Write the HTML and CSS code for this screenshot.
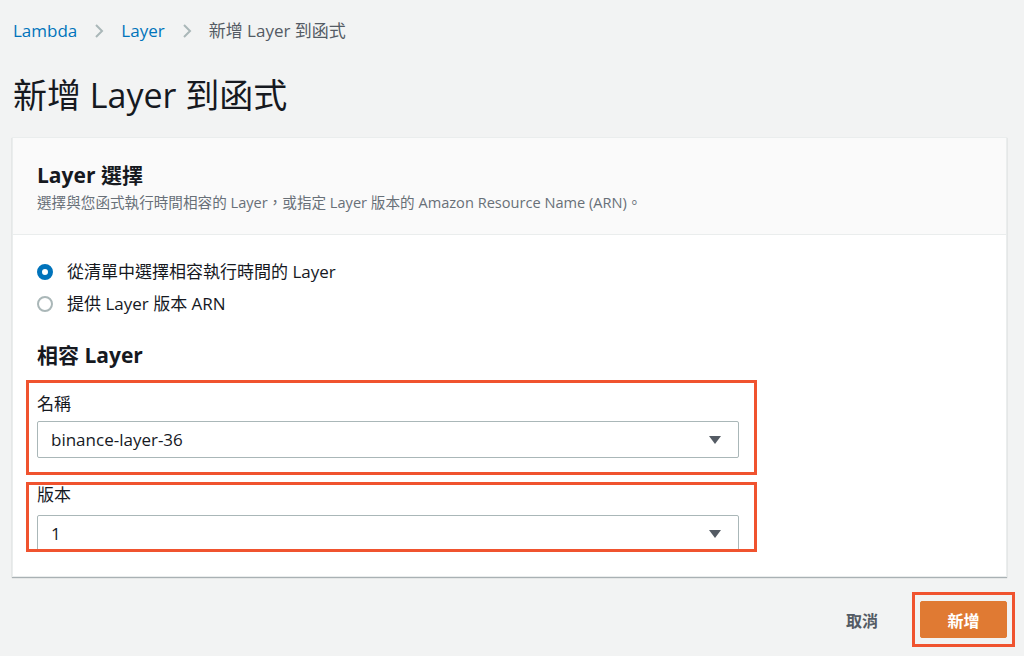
FILE: index.html
```html
<!DOCTYPE html>
<html lang="zh-Hant">

<head>
    <meta charset="UTF-8" />
    <meta name="viewport" content="width=device-width, initial-scale=1" />
    <title>新增 Layer 到函式</title>
    <link rel="stylesheet" href="styles.css">
</head>

<body>
    <nav class="breadcrumbs">
        <a href="#">Lambda</a>
        <svg class="crumb-sep" width="12" height="16" viewBox="0 0 12 16">
            <polyline points="3,2 9,8 3,14" fill="none" stroke="#aab7b8" stroke-width="2" />
        </svg>
        <a href="#">Layer</a>
        <svg class="crumb-sep" width="12" height="16" viewBox="0 0 12 16">
            <polyline points="3,2 9,8 3,14" fill="none" stroke="#aab7b8" stroke-width="2" />
        </svg>
        <span class="crumb-current">新增 Layer 到函式</span>
    </nav>

    <h1 class="page-title">新增 Layer 到函式</h1>

    <div class="panel">
        <div class="panel-header">
            <h2>Layer 選擇</h2>
            <p>選擇與您函式執行時間相容的 Layer，或指定 Layer 版本的 Amazon Resource Name (ARN)。</p>
        </div>
        <div class="panel-body">
            <div class="radio-group">
                <label class="radio"><span class="radio-dot checked"></span> 從清單中選擇相容執行時間的 Layer</label>
                <label class="radio"><span class="radio-dot"></span> 提供 Layer 版本 ARN</label>
            </div>

            <h3>相容 Layer</h3>

            <div class="field field-name">
                <div class="field-label">名稱</div>
                <div class="select">
                    <span>binance-layer-36</span>
                    <svg width="12" height="10" viewBox="0 0 12 10">
                        <polygon points="0,1 12,1 6,9" fill="#545b64" />
                    </svg>
                </div>
            </div>

            <div class="field field-version">
                <div class="field-label">版本</div>
                <div class="select">
                    <span>1</span>
                    <svg width="12" height="10" viewBox="0 0 12 10">
                        <polygon points="0,1 12,1 6,9" fill="#545b64" />
                    </svg>
                </div>
            </div>
        </div>
    </div>

    <div class="actions">
        <button class="btn-link">取消</button>
        <div class="highlight">
            <button class="btn-primary">新增</button>
        </div>
    </div>
</body>

</html>
```

FILE: styles.css
```css
body {
    margin: 0;
    background-color: #f2f3f3;
    color: #16191f;
    font-family: "Open Sans", "Noto Sans CJK TC", sans-serif;
}

.breadcrumbs {
    display: flex;
    align-items: center;
    padding: 19px 0 0 13px;
    font-size: 17px;
    line-height: 24px;
}

.breadcrumbs a {
    color: #0073bb;
    text-decoration: none;
}

.crumb-sep {
    margin: 0 16px;
}

.crumb-current {
    color: #545b64;
}

.page-title {
    margin: 32px 0 0 13px;
    font-size: 34px;
    line-height: 40px;
    font-weight: normal;
}

.panel {
    margin: 22px 17px 0 12px;
    background: white;
    border: 1px solid #eaeded;
    box-shadow: 0 1px 1px rgba(0, 28, 36, 0.3);
}

.panel-header {
    background: #fafafa;
    border-bottom: 1px solid #eaeded;
    padding: 23px 24px 22px;
}

.panel-header h2 {
    margin: 0;
    font-size: 21px;
    line-height: 28px;
    font-weight: bold;
}

.panel-header p {
    margin: 3px 0 0;
    font-size: 14.6px;
    line-height: 20px;
    color: #687078;
}

.panel-body {
    padding: 25px 24px 24px;
}

.radio-group {
    display: flex;
    flex-direction: column;
    gap: 8px;
}

.radio {
    display: flex;
    align-items: center;
    gap: 14px;
    font-size: 17px;
    line-height: 24px;
}

.radio-dot {
    box-sizing: border-box;
    width: 16px;
    height: 16px;
    border-radius: 50%;
    border: 2px solid #aab7b8;
    background: white;
}

.radio-dot.checked {
    border: 5px solid #0073bb;
}

.panel-body h3 {
    margin: 25px 0 0;
    font-size: 21px;
    line-height: 28px;
    font-weight: bold;
}

.field {
    box-sizing: border-box;
    width: 731px;
    margin: 11px 0 0 -11px;
    border: 3px solid #f0532f;
    padding-left: 8px;
}

.field-name {
    height: 95px;
    padding-top: 10px;
}

.field-version {
    height: 70px;
    margin-top: 7px;
    overflow: hidden;
}

.field-label {
    font-size: 17px;
    line-height: 22px;
}

.field-name .select {
    margin-top: 6px;
}

.field-version .field-label {
    line-height: 20px;
}

.field-version .select {
    margin-top: 10px;
}

.select {
    box-sizing: border-box;
    display: flex;
    align-items: center;
    justify-content: space-between;
    width: 702px;
    height: 37px;
    padding: 0 17px 0 13px;
    border: 1px solid #aab7b8;
    border-radius: 2px;
    background: white;
    font-size: 17px;
}

.actions {
    display: flex;
    justify-content: flex-end;
    align-items: center;
    margin: 15px 9px 0 0;
}

.btn-link {
    background: none;
    border: none;
    padding: 0 20px;
    margin-right: 14px;
    font-family: inherit;
    font-size: 16px;
    font-weight: bold;
    color: #545b64;
    cursor: pointer;
}

.highlight {
    border: 3px solid #f0532f;
    padding: 6px 5px;
}

.btn-primary {
    display: block;
    width: 87px;
    height: 37px;
    background-color: #e07a33;
    border: 1px solid #e07a33;
    border-radius: 2px;
    color: white;
    font-family: inherit;
    font-size: 16px;
    font-weight: bold;
    cursor: pointer;
}
```
